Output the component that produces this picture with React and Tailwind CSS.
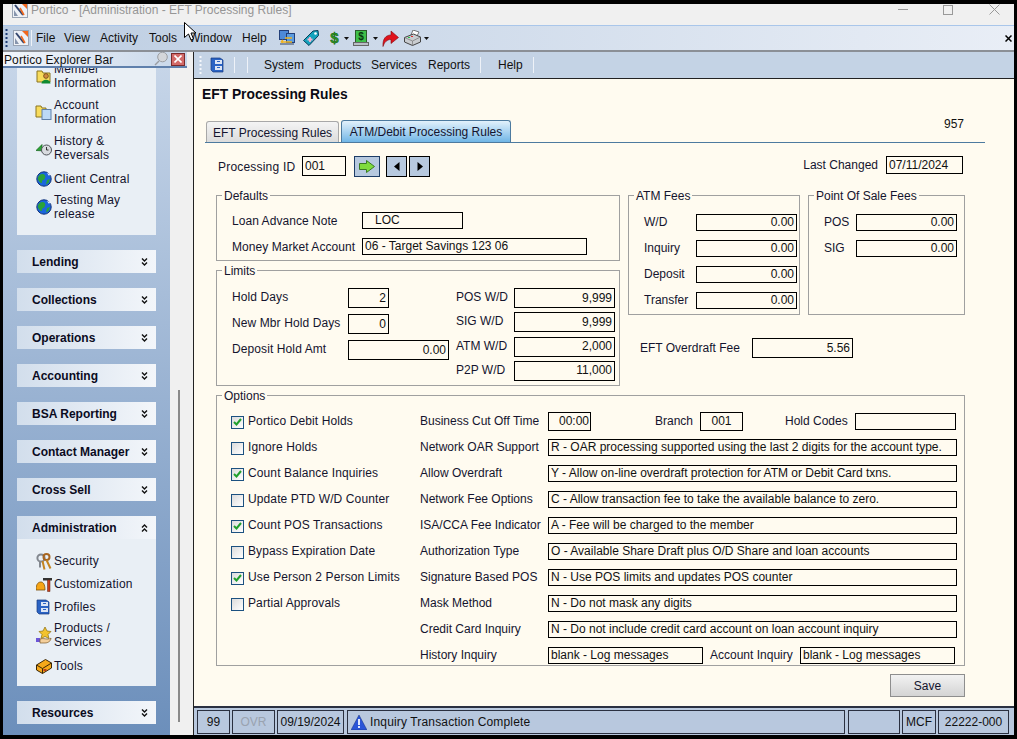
import React from "react";

const Logo = () => (
  <svg width="16" height="16" viewBox="0 0 16 16">
    <rect x="0.5" y="0.5" width="15" height="15" fill="#eef1f6" stroke="#98a3b3" />
    <path d="M9 1h6v6z" fill="#f2681d" />
    <path d="M3 3l8 10" stroke="#33466e" strokeWidth="2" />
    <path d="M2 8l4 6H2z" fill="#8795ad" />
    <path d="M8 6l4 7" stroke="#f2681d" strokeWidth="1.6" />
  </svg>
);
const Grip = ({ light }) => (
  <svg width="3" height="20" viewBox="0 0 3 20">
    {[1, 5, 9, 13, 17].map((y) => (
      <rect key={y} x="0.5" y={y} width="2" height="2" fill={light ? "#f5f8fc" : "#1f3f78"} />
    ))}
  </svg>
);
const FolderPerson = () => (
  <svg width="16" height="16" viewBox="0 0 16 16">
    <path d="M1 3h5l1 2h7v9H1z" fill="#f8dc5c" stroke="#8a7420" />
    <circle cx="10" cy="8" r="2.4" fill="#d08a3e" stroke="#5a3a10" strokeWidth=".7" />
    <path d="M5.5 15.5c0-5 9-5 9 0z" fill="#0f8a30" />
  </svg>
);
const FolderDoc = () => (
  <svg width="17" height="16" viewBox="0 0 17 16">
    <path d="M1 2h5l1 2h4v9H1z" fill="#f8dc5c" stroke="#8a7420" />
    <rect x="7" y="5.5" width="9" height="10" fill="#bcd9f5" stroke="#5f80a8" />
  </svg>
);
const History = () => (
  <svg width="16" height="16" viewBox="0 0 16 16">
    <path d="M0 10.5l6-6v3h5v3.5z" fill="#2aa535" stroke="#116018" strokeWidth=".7" />
    <circle cx="10.5" cy="10" r="5" fill="#d8dbdf" stroke="#4f5359" />
    <path d="M10.5 7v3h2" stroke="#333" fill="none" />
  </svg>
);
const Globe = () => (
  <svg width="16" height="16" viewBox="0 0 16 16">
    <circle cx="8" cy="8" r="7.2" fill="#1a66dc" stroke="#10327a" />
    <path d="M3.5 4c3-2.5 7-.5 5.5 3s-3 1-3 4-3.5-1-4-2.5 .5-3.5 1.500-4.500z" fill="#2aa23a" />
    <path d="M11 9l3-1-1.500 4-2.500 1.500z" fill="#2aa23a" />
    <path d="M11 1.500l4 2.500-2.500.5z" fill="#eaf2ff" />
  </svg>
);
const Keys = () => (
  <svg width="16" height="17" viewBox="0 0 16 17">
    <circle cx="5" cy="5" r="3.6" fill="none" stroke="#83888f" strokeWidth="2" />
    <circle cx="10.500" cy="4" r="3" fill="none" stroke="#a8651f" strokeWidth="2" />
    <path d="M6.500 8l2 8.500M10.500 7l4 8.500" stroke="#c48420" strokeWidth="2" />
    <path d="M4 8v6.500" stroke="#83888f" strokeWidth="2" />
  </svg>
);
const Custom = () => (
  <svg width="16" height="16" viewBox="0 0 16 16">
    <path d="M0 14c0-7 3-8 5-8s4 2 4 8z" fill="#f7a515" stroke="#7c4e08" strokeWidth=".8" />
    <path d="M7 2h9v2.500H7z" fill="#333" />
    <path d="M11.500 4h2.500v11.500h-2.500z" fill="#c9401a" stroke="#5e1e0c" strokeWidth=".5" />
  </svg>
);
const Cabinet = ({ s = 15 }) => (
  <svg width={s} height={s + 1} viewBox="0 0 15 16">
    <path d="M1 1h9l3 2v12H3l-2-2z" fill="#2a63c4" stroke="#173a80" strokeWidth=".7" />
    <rect x="5" y="3" width="7" height="4" fill="#dbe4f4" />
    <rect x="5" y="9" width="7" height="4" fill="#dbe4f4" />
    <rect x="7" y="4" width="3" height="1" fill="#2a63c4" />
    <rect x="7" y="10" width="3" height="1" fill="#2a63c4" />
  </svg>
);
const Products = () => (
  <svg width="16" height="17" viewBox="0 0 16 17">
    <path d="M9 0l2 4 4 .5-3 3 1 4-4-2-4 2 1-4-3-3 4-.5z" fill="#f3c32e" stroke="#8a6c0c" strokeWidth=".7" />
    <rect x="0" y="11" width="4" height="4" fill="#6c55d8" />
    <path d="M4 12c3-1 5 0 7 0s3 0 4-1c0 3-3 5-6 5H4z" fill="#f4cf9b" stroke="#7c5a28" strokeWidth=".7" />
  </svg>
);
const Toolbox = () => (
  <svg width="16" height="15" viewBox="0 0 16 15">
    <path d="M0.500 6l9-5.500 6 3.500v5l-9 5.500-6-3.500z" fill="#f5a81a" stroke="#3a2606" />
    <path d="M0.500 6l6 3.500 9-5.500M6.500 9.500v5" stroke="#3a2606" fill="none" />
    <rect x="7.500" y="10" width="3" height="2" fill="#c13a1a" />
  </svg>
);
const Monitors = () => (
  <svg width="16" height="16" viewBox="0 0 16 16">
    <rect x="0.500" y="0.500" width="9" height="9" fill="#4d8ad8" stroke="#23407a" />
    <rect x="7.500" y="3.500" width="8" height="9" fill="#5a9ce0" stroke="#23407a" />
    <path d="M2 12h11M2 12l2-2M2 12l2 2M13 8H6" stroke="#f0b21f" strokeWidth="1.500" fill="none" />
    <rect x="1" y="13" width="14" height="2" fill="#7d8da6" />
  </svg>
);
const Tag = () => (
  <svg width="16" height="16" viewBox="0 0 16 16">
    <path d="M0.500 10.500l9.500-9.500 5-.5.500 5-9.500 10z" fill="#14a3bd" stroke="#083e5a" />
    <circle cx="12.500" cy="3.500" r="1.300" fill="#fff" />
    <path d="M4.500 9.500h5M7 7v5" stroke="#f7b4d0" strokeWidth="1.800" />
  </svg>
);
const Dollar = () => (
  <svg width="13" height="18" viewBox="0 0 13 18">
    <text x="6.500" y="14" textAnchor="middle" fontFamily="Liberation Sans, sans-serif" fontSize="15" fontWeight="700" fill="#2f9b23" stroke="#0f5a0f" strokeWidth=".5">$</text>
  </svg>
);
const GreenDoc = () => (
  <svg width="16" height="16" viewBox="0 0 16 16">
    <rect x="2.500" y="0.500" width="11" height="12" fill="#3fc04a" stroke="#2c5a2c" />
    <rect x="0.500" y="12.500" width="15" height="3" fill="#b9bec6" stroke="#666" />
    <text x="8" y="10" textAnchor="middle" fontFamily="Liberation Sans, sans-serif" fontSize="10" fontWeight="700" fill="#083a10">$</text>
  </svg>
);
const RedArrow = () => (
  <svg width="17" height="17" viewBox="0 0 17 17">
    <path d="M1 16.500c-.5-8 3-11.500 8-11.500V1l7.500 6.500L9 13.500V9.500c-4 0-6.500 2.500-8 7z" fill="#e0121c" stroke="#7a0a10" strokeWidth=".6" />
  </svg>
);
const Printer = () => (
  <svg width="17" height="16" viewBox="0 0 17 16">
    <path d="M7 5l2-5 6 2-2 4z" fill="#fff" stroke="#555" strokeWidth=".8" />
    <path d="M0.500 7.500l9-3.500 7 3v5l-8 3.500-8-3.500z" fill="#c9ccd0" stroke="#444" />
    <path d="M0.500 7.500l8 3.500 8-4M8.500 11v4" stroke="#777" fill="none" strokeWidth=".7" />
    <rect x="4" y="7" width="2" height="1" fill="#22c040" />
    <rect x="7" y="6" width="2" height="1" fill="#e03030" />
  </svg>
);
const Caret = () => (
  <svg width="5" height="3" viewBox="0 0 5 3"><path d="M0 0h5L2.500 3z" fill="#111" /></svg>
);
const Chev = ({ up }) => (
  <svg width="7" height="8" viewBox="0 0 7 8" className={up ? "rotate-180" : ""}>
    <path d="M1 0.500l2.500 2.500L6 0.500M1 4.500l2.500 2.500L6 4.500" stroke="#111" strokeWidth="1.400" fill="none" />
  </svg>
);
const Check = () => (
  <svg width="9" height="8" viewBox="0 0 9 8">
    <path d="M1 4l2.500 2.500L8 1" stroke="#21a02d" strokeWidth="2" fill="none" />
  </svg>
);

const Item = ({ icon, children, cls }) => (
  <div className={"flex items-center pl-[16px] " + cls}>
    <span className="w-[21px] flex justify-center shrink-0">{icon}</span>
    <span className="leading-[14px] text-[12px] text-[#14142e] tracking-[0.2px]">{children}</span>
  </div>
);
const Head = ({ children, up }) => (
  <div className="mx-[14px] h-[23px] flex items-center justify-between pl-[15px] pr-[8px] bg-gradient-to-r from-[#d2deec] to-[#f3f6fa] font-bold text-[12px] text-[#0b0b1e]">
    <span>{children}</span>
    <Chev up={up} />
  </div>
);
const Field = ({ cls, children, right }) => (
  <div className={"border border-black leading-[15px] text-[12px] text-[#111] px-[2px] flex items-center whitespace-nowrap shrink-0 " + (right ? "justify-end " : "") + cls}>
    {children}
  </div>
);
const Group = ({ title, cls, children }) => (
  <div className={"relative border border-[#a0a0a0] " + cls}>
    <span className="absolute -top-[7px] left-[5px] px-[2px] bg-[#fffbf0] leading-[14px] text-[12px] text-[#14142e]">{title}</span>
    {children}
  </div>
);
const Check2 = ({ checked, children }) => (
  <div className="h-[26px] flex items-center gap-[4px] text-[12px] text-[#14142e] tracking-[0.12px]">
    <span className="w-[13px] h-[13px] mt-[2px] border border-[#1c5180] bg-gradient-to-br from-[#dcdcdc] to-[#ffffff] flex items-center justify-center shrink-0">
      {checked && <Check />}
    </span>
    <span className="-mt-[1px]">{children}</span>
  </div>
);
const Opt = ({ label, value }) => (
  <div className="h-[26px] flex items-center">
    <span className="w-[128px] text-[#14142e]">{label}</span>
    <Field cls="w-[409px] h-[17px]">{value}</Field>
  </div>
);
const Status = ({ cls, children }) => (
  <div className={"h-[24px] border border-[#2a3040] flex items-center text-[12px] shrink-0 " + cls}>{children}</div>
);

export default function App() {
  return (
    <div className="relative w-[1017px] h-[739px] overflow-hidden bg-black pt-[4px] pl-[3px] pr-[3px] pb-[4px] flex flex-col font-['Liberation_Sans',sans-serif] text-[12px] text-[#111]">
      {/* title bar */}
      <div className="h-[21px] bg-[#f0f0f0] flex items-start pl-[9px] shrink-0 overflow-hidden">
        <span className="-mt-[2px]"><Logo /></span>
        <span className="ml-[3px] leading-[12px] text-[12px] text-[#969696]">Portico - [Administration - EFT Processing Rules]</span>
        <div className="ml-auto h-[11px] flex items-center pr-[14px]">
          <span className="w-[10px] h-px bg-[#999] mr-[35px]"></span>
          <span className="w-[10px] h-[10px] border border-[#999] mr-[36px]"></span>
          <svg width="11" height="11" viewBox="0 0 11 11"><path d="M0.500 0.500l10 10M10.500 0.500l-10 10" stroke="#999" /></svg>
        </div>
      </div>
      {/* menu bar */}
      <div className="h-[27px] shrink-0 flex items-center pl-[2px] bg-gradient-to-r from-[#bccde2] to-[#e9eef6] border-t border-[#a9c6ea] border-b-2 border-b-[#8b8f96]">
        <Grip />
        <span className="ml-[5px]"><Logo /></span>
        <span className="ml-[2px] w-px h-[16px] bg-[#eef2f8]"></span>
        <span className="ml-[4px] w-[28px]">File</span>
        <span className="w-[36px]">View</span>
        <span className="w-[49px]">Activity</span>
        <span className="w-[40px]">Tools</span>
        <span className="w-[53px]">Window</span>
        <span className="w-[37px]">Help</span>
        <Monitors />
        <span className="ml-[8px]"><Tag /></span>
        <span className="ml-[9px]"><Dollar /></span>
        <span className="ml-[3px]"><Caret /></span>
        <span className="ml-[4px]"><GreenDoc /></span>
        <span className="ml-[4px]"><Caret /></span>
        <span className="ml-[4px]"><RedArrow /></span>
        <span className="ml-[5px]"><Printer /></span>
        <span className="ml-[3px]"><Caret /></span>
        <svg className="ml-auto mr-[2px]" width="7" height="7" viewBox="0 0 7 7"><path d="M0.500 0.500l6 6M6.500 0.500l-6 6" stroke="#000" strokeWidth="1.500" /></svg>
      </div>

      <div className="flex flex-1 min-h-0">
        {/* sidebar */}
        <div className="w-[190px] shrink-0 bg-[#f0f0f0] flex flex-col relative">
          <div className="relative z-10 h-[16px] w-[184px] shrink-0 flex items-center justify-between pl-[1px] pr-[2px] pt-[1px] bg-gradient-to-r from-[#f2f6fb] to-[#c7d6e9] border-b-2 border-[#5f80ac] text-[12px] text-[#111] tracking-[0.1px]">
            <span>Portico Explorer Bar</span>
            <span className="flex items-center gap-[3px] -mt-[1px]">
              <svg width="14" height="14" viewBox="0 0 14 14">
                <circle cx="8.500" cy="5" r="4.800" fill="#d4d6da" stroke="#9a9da2" />
                <path d="M5 9l-4 4" stroke="#9a9da2" strokeWidth="1.500" />
              </svg>
              <span className="w-[14px] h-[13px] bg-[#d26a68] border border-[#7a2a2a] flex items-center justify-center">
                <svg width="8" height="8" viewBox="0 0 8 8"><path d="M0.500 0.500l7 7M7.500 0.500l-7 7" stroke="#fff" strokeWidth="1.600" /></svg>
              </span>
            </span>
          </div>
          <div className="w-[167px] flex-1 bg-gradient-to-b from-[#c6d5e8] to-[#6c8fbb] flex flex-col">
            <div className="mx-[14px] h-[167px] bg-[#e9eff5] overflow-hidden shrink-0">
              <Item icon={<FolderPerson />} cls="-mt-[6px]">Member<br />Information</Item>
              <Item icon={<FolderDoc />} cls="mt-[8px]">Account<br />Information</Item>
              <Item icon={<History />} cls="mt-[8px]">History &amp;<br />Reversals</Item>
              <Item icon={<Globe />} cls="mt-[9px]">Client Central</Item>
              <Item icon={<Globe />} cls="mt-[6px]">Testing May<br />release</Item>
            </div>
            <div className="mt-[15px] flex flex-col gap-[15px]">
              <Head>Lending</Head>
              <Head>Collections</Head>
              <Head>Operations</Head>
              <Head>Accounting</Head>
              <Head>BSA Reporting</Head>
              <Head>Contact Manager</Head>
              <Head>Cross Sell</Head>
              <div>
                <Head up>Administration</Head>
                <div className="mx-[14px] h-[147px] bg-[#e9eff5] pt-[15px]">
                  <Item icon={<Keys />} cls="h-[14px]">Security</Item>
                  <Item icon={<Custom />} cls="mt-[9px] h-[14px]">Customization</Item>
                  <Item icon={<Cabinet />} cls="mt-[9px] h-[14px]">Profiles</Item>
                  <Item icon={<Products />} cls="mt-[7px]">Products /<br />Services</Item>
                  <Item icon={<Toolbox />} cls="mt-[10px] h-[14px]">Tools</Item>
                </div>
              </div>
              <Head>Resources</Head>
            </div>
          </div>
          <span className="absolute left-[175px] top-[338px] w-[2px] h-[332px] bg-[#8a8a8a]"></span>
        </div>

        {/* main */}
        <div className="flex-1 min-w-0 flex flex-col border-l border-[#222]">
          <div className="h-[27px] shrink-0 flex items-center pl-[5px] bg-[#c4d3e5] border-b border-[#222] text-[12px]">
            <Grip light />
            <span className="ml-[8px]"><Cabinet /></span>
            <span className="ml-[9px] w-px h-[16px] bg-[#eef2f8]"></span>
            <span className="ml-[12px] w-px h-[16px] bg-[#eef2f8]"></span>
            <span className="ml-[16px] w-[50px]">System</span>
            <span className="w-[57px]">Products</span>
            <span className="w-[57px]">Services</span>
            <span className="w-[52px]">Reports</span>
            <span className="w-px h-[16px] bg-[#eef2f8]"></span>
            <span className="ml-[17px] w-[35px]">Help</span>
            <span className="w-px h-[16px] bg-[#eef2f8]"></span>
          </div>

          <div className="flex-1 min-h-0 bg-[#fffbf0] relative">
            <h1 className="ml-[8px] pt-[8px] text-[13.8px] leading-[16px] font-bold text-[#0a0a14]">EFT Processing Rules</h1>

            <div className="ml-[11px] mt-[18px] w-[780px] h-[22px] flex items-end justify-between border-b border-[#4d7a9f] pr-[21px]">
              <div className="flex items-end pl-[1px] gap-[2px]">
                <div className="w-[133px] h-[21px] rounded-t-[3px] border border-b-0 border-[#a8a8a8] bg-gradient-to-b from-[#f4f4f4] to-[#dcdcdc] flex items-center justify-center text-[#14142e] pt-[1px]">EFT Processing Rules</div>
                <div className="w-[170px] h-[22px] rounded-t-[3px] border border-b-0 border-[#4d7a9f] bg-gradient-to-b from-[#e2f1fb] to-[#70b6e6] flex items-center justify-center text-[#14142e] pt-[1px]">ATM/Debit Processing Rules</div>
              </div>
              <span className="mb-[9px]">957</span>
            </div>

            <div className="ml-[24px] mt-[13px] w-[745px] h-[21px] flex items-start">
              <span className="w-[84px] h-[21px] flex items-center text-[#14142e] tracking-[0.2px]">Processing ID</span>
              <Field cls="w-[44px] h-[20px]">001</Field>
              <button className="ml-[8px] w-[26px] h-[21px] bg-[#b7c9df] border border-[#1d3c66] flex items-center justify-center">
                <svg width="16" height="13" viewBox="0 0 16 13"><path d="M0.500 3.500h7v-3l8 6-8 6v-3h-7z" fill="#7fdc3c" stroke="#3a7a22" /></svg>
              </button>
              <button className="ml-[6px] w-[21px] h-[21px] bg-[#b7c9df] border border-black flex items-center justify-center">
                <svg width="6" height="9" viewBox="0 0 6 9"><path d="M5.500 0v9L0 4.500z" fill="#000" /></svg>
              </button>
              <button className="ml-[2px] w-[21px] h-[21px] bg-[#b7c9df] border border-black flex items-center justify-center">
                <svg width="6" height="9" viewBox="0 0 6 9"><path d="M0.500 0v9L6 4.500z" fill="#000" /></svg>
              </button>
              <span className="ml-auto h-[17px] flex items-center text-[#14142e]">Last Changed</span>
              <Field cls="ml-[8px] w-[77px] h-[18px]">07/11/2024</Field>
            </div>

            <div className="ml-[22px] mt-[18px] flex gap-[8px] h-[191px]">
              <div className="w-[404px] shrink-0">
                <Group title="Defaults" cls="h-[66px] pt-[16px] pl-[15px]">
                  <div className="flex items-center h-[17px]">
                    <span className="w-[130px] text-[#14142e] tracking-[0.05px]">Loan Advance Note</span>
                    <Field cls="w-[101px] h-[17px] pl-[12px]">LOC</Field>
                  </div>
                  <div className="flex items-center h-[17px] mt-[9px]">
                    <span className="w-[130px] text-[#14142e] tracking-[0.05px]">Money Market Account</span>
                    <Field cls="w-[225px] h-[17px]">06 - Target Savings 123 06</Field>
                  </div>
                </Group>
                <Group title="Limits" cls="mt-[9px] h-[116px] pt-[17px] pl-[15px] flex">
                  <div className="w-[224px] shrink-0 flex flex-col">
                    {[["Hold Days", "2", "w-[41px]"], ["New Mbr Hold Days", "0", "w-[41px]"], ["Deposit Hold Amt", "0.00", "w-[101px]"]].map(([l, v, w]) => (
                      <div key={l} className="h-[26px] flex items-start">
                        <span className="w-[116px] text-[#14142e] leading-[18px] tracking-[0.1px]">{l}</span>
                        <Field right cls={"h-[20px] " + w}>{v}</Field>
                      </div>
                    ))}
                  </div>
                  <div className="flex flex-col">
                    {[["POS W/D", "9,999"], ["SIG W/D", "9,999"], ["ATM W/D", "2,000"], ["P2P W/D", "11,000"]].map(([l, v]) => (
                      <div key={l} className="h-[26px] flex items-start">
                        <span className="w-[58px] text-[#14142e] leading-[18px]">{l}</span>
                        <Field right cls="h-[20px] w-[101px]">{v}</Field>
                      </div>
                    ))}
                  </div>
                </Group>
              </div>
              <div>
                <div className="flex gap-[8px]">
                  <Group title="ATM Fees" cls="w-[172px] h-[120px] pt-[18px] pl-[15px]">
                    {["W/D", "Inquiry", "Deposit", "Transfer"].map((l) => (
                      <div key={l} className="h-[26px] flex items-start">
                        <span className="w-[52px] text-[#14142e] leading-[17px]">{l}</span>
                        <Field right cls="w-[101px] h-[17px]">0.00</Field>
                      </div>
                    ))}
                  </Group>
                  <Group title="Point Of Sale Fees" cls="w-[157px] h-[120px] pt-[18px] pl-[15px]">
                    {["POS", "SIG"].map((l) => (
                      <div key={l} className="h-[26px] flex items-start">
                        <span className="w-[32px] text-[#14142e] leading-[17px]">{l}</span>
                        <Field right cls="w-[101px] h-[17px]">0.00</Field>
                      </div>
                    ))}
                  </Group>
                </div>
                <div className="ml-[12px] mt-[23px] flex items-center h-[20px]">
                  <span className="w-[112px] text-[#14142e]">EFT Overdraft Fee</span>
                  <Field right cls="w-[101px] h-[20px]">5.56</Field>
                </div>
              </div>
            </div>

            <Group title="Options" cls="ml-[22px] mt-[9px] w-[749px] h-[271px] pt-[12px] flex">
              <div className="w-[203px] pl-[14px] shrink-0">
                <Check2 checked>Portico Debit Holds</Check2>
                <Check2>Ignore Holds</Check2>
                <Check2 checked>Count Balance Inquiries</Check2>
                <Check2>Update PTD W/D Counter</Check2>
                <Check2 checked>Count POS Transactions</Check2>
                <Check2>Bypass Expiration Date</Check2>
                <Check2 checked>Use Person 2 Person Limits</Check2>
                <Check2>Partial Approvals</Check2>
              </div>
              <div className="flex-1">
                <div className="h-[26px] flex items-center text-[#14142e]">
                  <span className="w-[128px]">Business Cut Off Time</span>
                  <Field cls="w-[43px] h-[19px] pl-[10px]">00:00</Field>
                  <span className="ml-[64px] w-[45px]">Branch</span>
                  <Field cls="w-[43px] h-[19px] justify-center">001</Field>
                  <span className="ml-[42px] w-[70px]">Hold Codes</span>
                  <Field cls="w-[101px] h-[17px]"></Field>
                </div>
                <Opt label="Network OAR Support" value="R - OAR processing supported using the last 2 digits for the account type." />
                <Opt label="Allow Overdraft" value="Y - Allow on-line overdraft protection for ATM or Debit Card txns." />
                <Opt label="Network Fee Options" value="C - Allow transaction fee to take the available balance to zero." />
                <Opt label="ISA/CCA Fee Indicator" value="A - Fee will be charged to the member" />
                <Opt label="Authorization Type" value="O - Available Share Draft plus O/D Share and loan accounts" />
                <Opt label="Signature Based POS" value="N - Use POS limits and updates POS counter" />
                <Opt label="Mask Method" value="N - Do not mask any digits" />
                <Opt label="Credit Card Inquiry" value="N - Do not include credit card account on loan account inquiry" />
                <div className="h-[26px] flex items-center text-[#14142e]">
                  <span className="w-[128px]">History Inquiry</span>
                  <Field cls="w-[155px] h-[17px]">blank - Log messages</Field>
                  <span className="ml-[7px] w-[90px]">Account Inquiry</span>
                  <Field cls="w-[155px] h-[17px]">blank - Log messages</Field>
                </div>
              </div>
            </Group>

            <button className="block ml-[696px] mt-[8px] w-[75px] h-[23px] border border-[#8e8e8e] bg-gradient-to-b from-[#f2f2f2] to-[#d4d4d4] text-[12px] text-[#14142e]">Save</button>
          </div>

          <div className="h-[29px] shrink-0 bg-[#b8c8de] border-t-2 border-[#2a3040] pl-[3px] pt-[2px] flex items-start">
            <Status cls="w-[33px] justify-center">99</Status>
            <Status cls="ml-[2px] w-[43px] justify-center text-[#9aa3b0]">OVR</Status>
            <Status cls="ml-[2px] w-[67px] justify-center">09/19/2024</Status>
            <Status cls="ml-[3px] w-[498px] pl-[3px] gap-[3px]">
              <svg width="16" height="15" viewBox="0 0 16 15">
                <path d="M8 0l8 15H0z" fill="#2a55d8" stroke="#16307e" strokeWidth=".5" />
                <path d="M8 4v6" stroke="#dfe8ff" strokeWidth="2" />
                <rect x="7" y="11" width="2" height="2" fill="#dfe8ff" />
              </svg>
              <span className="tracking-[0.15px]">Inquiry Transaction Complete</span>
            </Status>
            <Status cls="ml-[3px] w-[52px]"></Status>
            <Status cls="ml-[2px] w-[34px] justify-center">MCF</Status>
            <Status cls="ml-[2px] w-[71px] justify-center">22222-000</Status>
          </div>
        </div>
      </div>

      {/* mouse pointer */}
      <svg className="absolute left-[184px] top-[22px]" width="12" height="19" viewBox="0 0 12 19">
        <path d="M0.500 0.500v15l4-3.500 2.500 6 2.500-1-2.500-6h5z" fill="#fff" stroke="#000" />
      </svg>
    </div>
  );
}
